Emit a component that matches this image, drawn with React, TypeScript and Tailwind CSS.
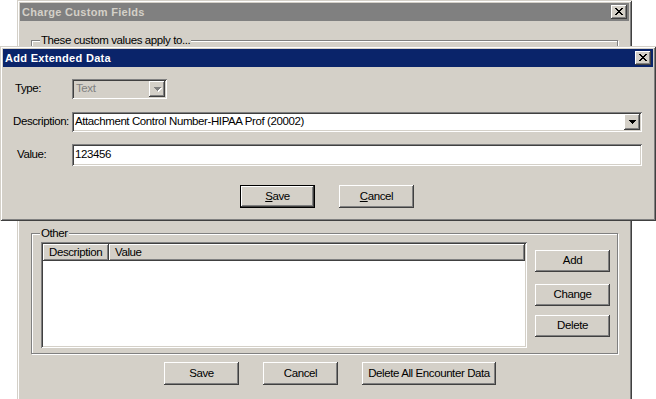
import React from "react";

const RAISED =
  "shadow-[inset_-1px_-1px_0_#404040,inset_1px_1px_0_#ffffff,inset_-2px_-2px_0_#808080,inset_2px_2px_0_#d4d0c8]";
const WIN =
  "shadow-[inset_1px_1px_0_#d4d0c8,inset_-1px_-1px_0_#404040,inset_2px_2px_0_#ffffff,inset_-2px_-2px_0_#808080]";
const SUNKEN =
  "shadow-[inset_1px_1px_0_#808080,inset_-1px_-1px_0_#ffffff,inset_2px_2px_0_#404040,inset_-2px_-2px_0_#d4d0c8]";

function CloseGlyph() {
  const rows = [
    [0, 1, 6, 7],
    [1, 2, 5, 6],
    [2, 3, 4, 5],
    [3, 4],
    [2, 3, 4, 5],
    [1, 2, 5, 6],
    [0, 1, 6, 7],
  ];
  return (
    <svg width="8" height="7" viewBox="0 0 8 7" shapeRendering="crispEdges">
      {rows.map((r, y) =>
        r.map((x) => <rect key={`${x}-${y}`} x={x} y={y} width="1" height="1" fill="#000" />)
      )}
    </svg>
  );
}

function CloseBtn() {
  return (
    <div className={`w-[16px] h-[14px] bg-[#d4d0c8] ${RAISED} flex items-center justify-center pb-[1px] pr-[1px]`}>
      <CloseGlyph />
    </div>
  );
}

function Arrow({ disabled }: { disabled?: boolean }) {
  const c = disabled ? "#808080" : "#000";
  return (
    <svg width="8" height="5" viewBox="0 0 8 5" shapeRendering="crispEdges">
      {disabled && (
        <g fill="#fff">
          <rect x="1" y="1" width="7" height="1" />
          <rect x="2" y="2" width="5" height="1" />
          <rect x="3" y="3" width="3" height="1" />
          <rect x="4" y="4" width="1" height="1" />
        </g>
      )}
      <g fill={c}>
        <rect x="0" y="0" width="7" height="1" />
        <rect x="1" y="1" width="5" height="1" />
        <rect x="2" y="2" width="3" height="1" />
        <rect x="3" y="3" width="1" height="1" />
      </g>
    </svg>
  );
}

function DropBtn({ disabled }: { disabled?: boolean }) {
  return (
    <div className={`w-[16px] h-[16px] bg-[#d4d0c8] ${RAISED} flex items-center justify-center pl-[1px] pt-[1px]`}>
      <Arrow disabled={disabled} />
    </div>
  );
}

function Btn({
  children,
  className = "",
  isDefault,
}: {
  children: React.ReactNode;
  className?: string;
  isDefault?: boolean;
}) {
  if (isDefault) {
    return (
      <div className={`border border-black flex ${className}`}>
        <div className={`flex-1 bg-[#d4d0c8] ${RAISED} flex items-center justify-center`}>{children}</div>
      </div>
    );
  }
  return (
    <div className={`bg-[#d4d0c8] ${RAISED} flex items-center justify-center whitespace-nowrap ${className}`}>
      {children}
    </div>
  );
}

function Group({
  label,
  className = "",
  children,
}: {
  label: string;
  className?: string;
  children?: React.ReactNode;
}) {
  return (
    <div
      className={`relative border border-[#808080] shadow-[inset_1px_1px_0_#ffffff,1px_1px_0_#ffffff] ${className}`}
    >
      <span className="absolute left-[8px] top-[-8px] bg-[#d4d0c8] px-[1px] leading-[14px]">{label}</span>
      {children}
    </div>
  );
}

export default function App() {
  return (
    <div className="relative w-[656px] h-[399px] bg-white overflow-hidden font-['Liberation_Sans',Arial,sans-serif] text-[11.5px] tracking-[-0.4px] whitespace-nowrap text-black">
      {/* Background window: Charge Custom Fields */}
      <div className={`absolute left-[17px] top-0 w-[615px] h-[401px] bg-[#d4d0c8] ${WIN} p-[3px] flex flex-col`}>
        <div className="h-[18px] bg-[#808080] flex items-center justify-between pl-[2px] pr-[2px]">
          <span className="font-bold text-[#d4d0c8] text-[11px] tracking-[0.3px]">Charge Custom Fields</span>
          <CloseBtn />
        </div>
        <div className="flex flex-col pl-[11px]">
          <Group label="These custom values apply to..." className="mt-[19px] w-[587px] h-[176px]" />
          <Group label="Other" className="mt-[17px] w-[587px] h-[121px]">
            <div className="flex pl-[9px] pt-[8px]">
              <div className={`w-[486px] h-[106px] bg-white ${SUNKEN} p-[2px]`}>
                <div className="flex h-[17px]">
                  <div className={`w-[66px] bg-[#d4d0c8] ${RAISED} pl-[6px] leading-[16px]`}>Description</div>
                  <div className={`flex-1 bg-[#d4d0c8] ${RAISED} pl-[6px] leading-[16px]`}>Value</div>
                </div>
              </div>
              <div className="flex flex-col ml-[8px]">
                <Btn className="mt-[8px] w-[75px] h-[22px]">Add</Btn>
                <Btn className="mt-[12px] w-[75px] h-[22px]">Change</Btn>
                <Btn className="mt-[9px] w-[75px] h-[22px]">Delete</Btn>
              </div>
            </div>
          </Group>
          <div className="flex mt-[8px] pl-[133px] gap-[24px]">
            <Btn className="w-[75px] h-[23px]">Save</Btn>
            <Btn className="w-[75px] h-[23px]">Cancel</Btn>
            <Btn className="w-[134px] h-[23px]">Delete All Encounter Data</Btn>
          </div>
        </div>
      </div>

      {/* Foreground dialog: Add Extended Data */}
      <div className={`absolute left-0 top-[46px] w-[656px] h-[175px] bg-[#d4d0c8] ${WIN} p-[3px] flex flex-col`}>
        <div className="h-[18px] bg-[#0a246a] flex items-center justify-between pl-[2px] pr-[2px]">
          <span className="font-bold text-white text-[11px] tracking-[0.3px]">Add Extended Data</span>
          <CloseBtn />
        </div>
        <div className="flex flex-col">
          <div className="flex items-center mt-[12px] h-[20px]">
            <div className="w-[69px] pl-[12px]">Type:</div>
            <div className={`w-[95px] h-[20px] bg-[#d4d0c8] ${SUNKEN} p-[2px] flex items-center`}>
              <span className="flex-1 pl-[2px] text-[#808080]">Text</span>
              <DropBtn disabled />
            </div>
          </div>
          <div className="flex items-center mt-[13px] h-[20px]">
            <div className="w-[69px] pl-[10px]">Description:</div>
            <div className={`w-[570px] h-[20px] bg-white ${SUNKEN} p-[2px] flex items-center`}>
              <span className="flex-1 pl-[1px]">Attachment Control Number-HIPAA Prof (20002)</span>
              <DropBtn />
            </div>
          </div>
          <div className="flex items-center mt-[12px] h-[22px]">
            <div className="w-[69px] pl-[14px]">Value:</div>
            <div className={`w-[570px] h-[22px] bg-white ${SUNKEN} p-[2px] flex items-center`}>
              <span className="pl-[1px]">123456</span>
            </div>
          </div>
          <div className="flex mt-[19px] pl-[237px] gap-[24px]">
            <Btn isDefault className="w-[75px] h-[23px]">
              <span>
                <span className="underline">S</span>ave
              </span>
            </Btn>
            <Btn className="w-[75px] h-[23px]">
              <span>
                <span className="underline">C</span>ancel
              </span>
            </Btn>
          </div>
        </div>
      </div>
    </div>
  );
}
